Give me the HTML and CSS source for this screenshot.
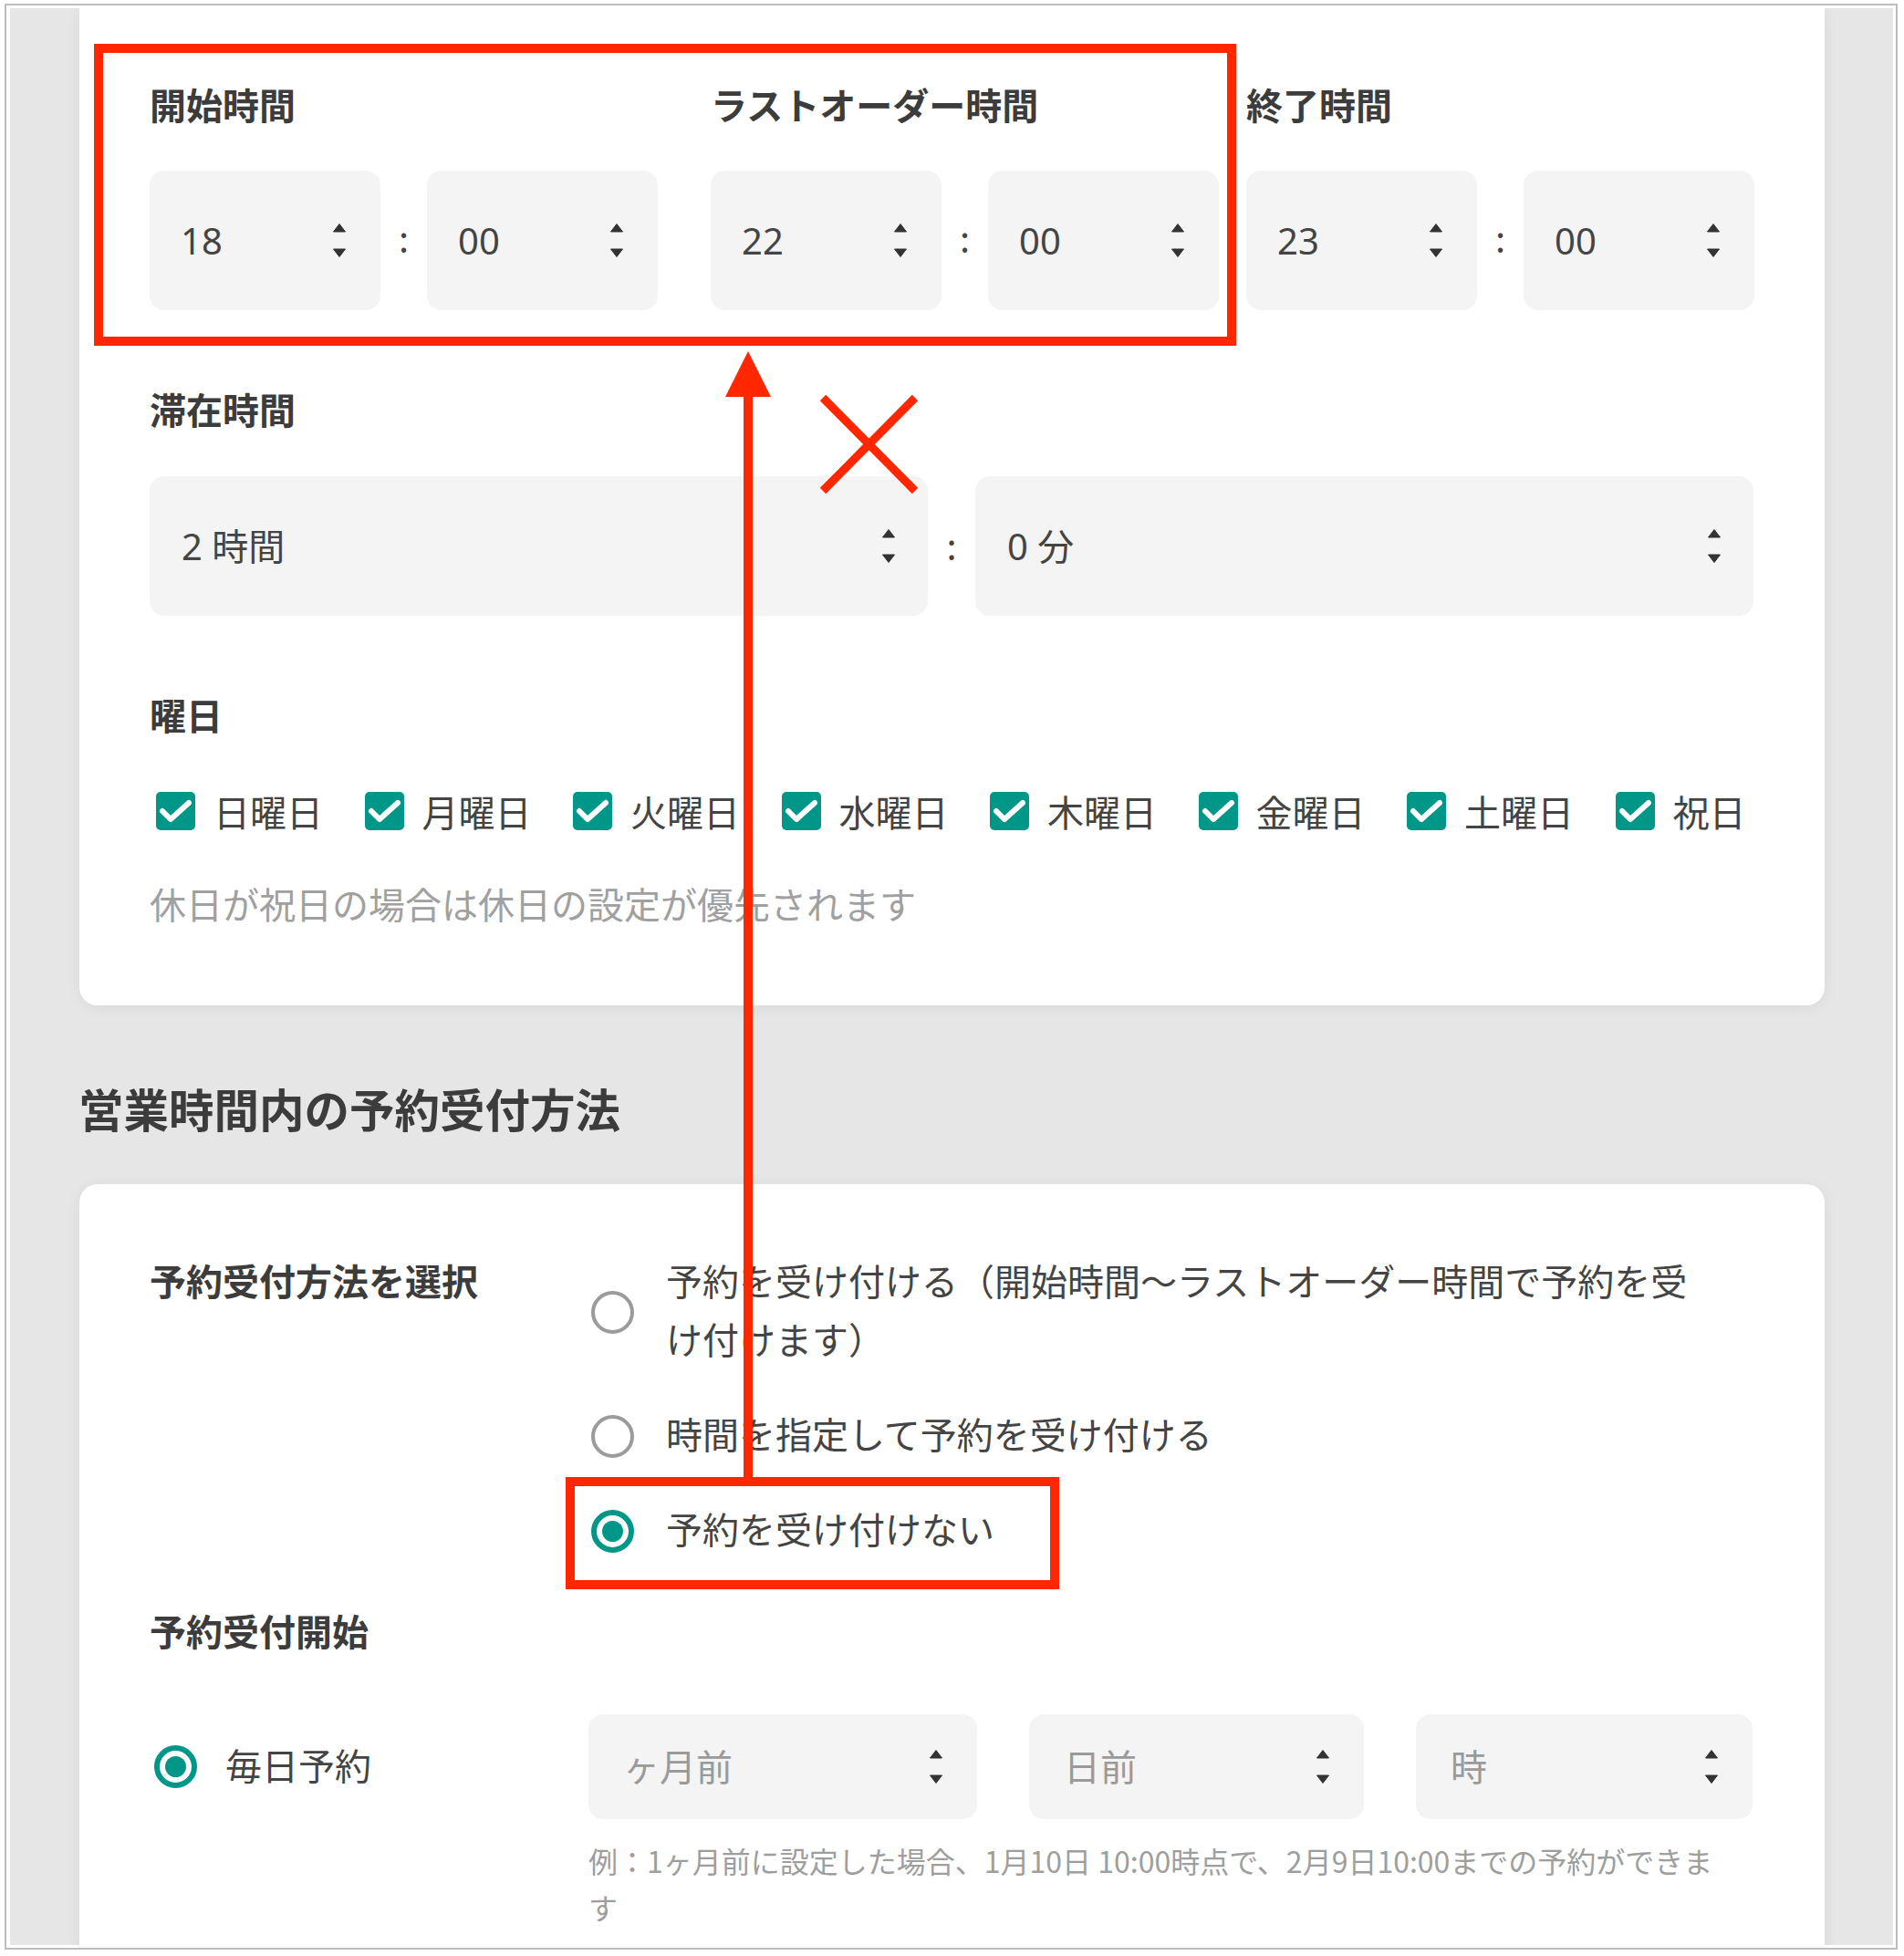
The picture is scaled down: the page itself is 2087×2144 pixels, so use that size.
FILE: index.html
```html
<!DOCTYPE html>
<html lang="ja">
<head>
    <meta charset="UTF-8">
    <meta name="viewport" content="width=device-width, initial-scale=1.0">
    <title>営業時間の設定</title>
    <link rel="stylesheet" href="styles.css">
</head>
<body>
    <svg class="defs" width="0" height="0">
        <symbol id="spin" viewBox="0 0 14 37">
            <path d="M7 0.5 L13.5 9 H0.5 Z M0.5 28 H13.5 L7 36.5 Z" fill="#333" stroke="#333" stroke-width="1" stroke-linejoin="round"/>
        </symbol>
        <symbol id="tick" viewBox="0 0 43 42">
            <polyline points="7,21 16,30 36,12" fill="none" stroke="#fff" stroke-width="6" stroke-linecap="round" stroke-linejoin="round"/>
        </symbol>
    </svg>

    <div class="frame">
        <div class="screen">

            <div class="card card-top">
                <div class="times">
                    <div class="time-group">
                        <div class="field-label">開始時間</div>
                        <div class="pair">
                            <div class="select time"><span>18</span><svg class="spin"><use href="#spin"/></svg></div>
                            <span class="colon">:</span>
                            <div class="select time"><span>00</span><svg class="spin"><use href="#spin"/></svg></div>
                        </div>
                    </div>
                    <div class="time-group">
                        <div class="field-label">ラストオーダー時間</div>
                        <div class="pair">
                            <div class="select time"><span>22</span><svg class="spin"><use href="#spin"/></svg></div>
                            <span class="colon">:</span>
                            <div class="select time"><span>00</span><svg class="spin"><use href="#spin"/></svg></div>
                        </div>
                    </div>
                    <div class="time-group">
                        <div class="field-label">終了時間</div>
                        <div class="pair">
                            <div class="select time"><span>23</span><svg class="spin"><use href="#spin"/></svg></div>
                            <span class="colon">:</span>
                            <div class="select time"><span>00</span><svg class="spin"><use href="#spin"/></svg></div>
                        </div>
                    </div>
                </div>

                <div class="field-label spaced">滞在時間</div>
                <div class="pair stay">
                    <div class="select"><span>2 時間</span><svg class="spin"><use href="#spin"/></svg></div>
                    <span class="colon wide">:</span>
                    <div class="select"><span>0 分</span><svg class="spin"><use href="#spin"/></svg></div>
                </div>

                <div class="field-label spaced">曜日</div>
                <div class="days">
                    <label class="day"><span class="check"><svg><use href="#tick"/></svg></span>日曜日</label>
                    <label class="day"><span class="check"><svg><use href="#tick"/></svg></span>月曜日</label>
                    <label class="day"><span class="check"><svg><use href="#tick"/></svg></span>火曜日</label>
                    <label class="day"><span class="check"><svg><use href="#tick"/></svg></span>水曜日</label>
                    <label class="day"><span class="check"><svg><use href="#tick"/></svg></span>木曜日</label>
                    <label class="day"><span class="check"><svg><use href="#tick"/></svg></span>金曜日</label>
                    <label class="day"><span class="check"><svg><use href="#tick"/></svg></span>土曜日</label>
                    <label class="day"><span class="check"><svg><use href="#tick"/></svg></span>祝日</label>
                </div>
                <p class="note">休日が祝日の場合は休日の設定が優先されます</p>
            </div>

            <h2 class="section-title">営業時間内の予約受付方法</h2>

            <div class="card card-bottom">
                <div class="method">
                    <div class="row-label">予約受付方法を選択</div>
                    <div class="options">
                        <label class="option"><span class="radio"></span><span class="option-text">予約を受け付ける（開始時間〜ラストオーダー時間で予約を受け付けます）</span></label>
                        <label class="option"><span class="radio"></span><span class="option-text">時間を指定して予約を受け付ける</span></label>
                        <label class="option"><span class="radio on"></span><span class="option-text">予約を受け付けない</span></label>
                    </div>
                </div>

                <div class="field-label start-label">予約受付開始</div>
                <div class="start-row">
                    <label class="option daily"><span class="radio on"></span><span class="option-text">毎日予約</span></label>
                    <div class="start-fields">
                        <div class="selects">
                            <div class="select short month"><span class="placeholder">ヶ月前</span><svg class="spin"><use href="#spin"/></svg></div>
                            <div class="select short dayago"><span class="placeholder">日前</span><svg class="spin"><use href="#spin"/></svg></div>
                            <div class="select short hour"><span class="placeholder">時</span><svg class="spin"><use href="#spin"/></svg></div>
                        </div>
                        <p class="example">例：1ヶ月前に設定した場合、1月10日 10:00時点で、2月9日10:00までの予約ができます</p>
                    </div>
                </div>
            </div>

            <!-- annotations -->
            <div class="mark mark-times"></div>
            <div class="mark mark-option"></div>
            <svg class="arrows" width="2064" height="2123">
                <line x1="809" y1="420" x2="809" y2="1614" stroke="#ff2600" stroke-width="10"/>
                <polygon points="809,376 834,426 784,426" fill="#ff2600"/>
                <line x1="891" y1="427" x2="992" y2="529" stroke="#ff2600" stroke-width="9"/>
                <line x1="992" y1="427" x2="891" y2="529" stroke="#ff2600" stroke-width="9"/>
            </svg>
        </div>
    </div>
</body>
</html>
```

FILE: styles.css
```css
* {
    box-sizing: border-box;
}
body {
    margin: 0;
    background: #fff;
    font-family: "Noto Sans CJK JP", "Noto Sans", sans-serif;
    color: #444;
}
.defs {
    position: absolute;
}
.frame {
    width: 2075px;
    height: 2133px;
    margin: 4px 0 0 5px;
    padding: 3px 3px 3px 4px;
    border: 2px solid #bdbdbd;
}
.screen {
    position: relative;
    height: 100%;
    overflow: hidden;
    padding: 0 75px 0 76px;
    background: #e6e6e6;
}
.card {
    padding: 0 78px 0 77px;
    background: #fff;
    box-shadow: 0 2px 18px rgba(0, 0, 0, 0.06);
}
.card-top {
    padding-top: 77px;
    padding-bottom: 84px;
    border-radius: 0 0 20px 20px;
}
.card-bottom {
    padding-top: 76px;
    padding-bottom: 80px;
    border-radius: 20px 20px 0 0;
}
.field-label {
    font-size: 40px;
    font-weight: 700;
    line-height: 56px;
    color: #3c3c3c;
}
.field-label.spaced {
    margin-top: 80px;
}
.times {
    display: flex;
}
.time-group:nth-child(1) {
    margin-right: 58px;
}
.time-group:nth-child(2) {
    margin-right: 30px;
}
.pair {
    display: flex;
    align-items: center;
    margin-top: 45px;
}
.pair.stay {
    margin-top: 46px;
}
.colon {
    width: 51px;
    margin: -5px 0 5px;
    text-align: center;
    font-size: 40px;
    line-height: 1;
    color: #444;
}
.colon.wide {
    width: 52px;
    margin: -3px 0 3px;
}
.select {
    display: flex;
    align-items: center;
    justify-content: space-between;
    height: 153px;
    padding: 0 38px 0 34px;
    border-radius: 16px;
    background: #f4f4f4;
    font-size: 40px;
    color: #444;
}
.select span {
    margin: -2px 0 2px;
    font-family: "Noto Sans", "Noto Sans CJK JP", sans-serif;
}
.select.time span {
    margin: 0;
}
.select.time {
    width: 253px;
}
.stay .select {
    flex: 1;
    padding-left: 35px;
    padding-right: 36px;
}
.spin {
    width: 14px;
    height: 37px;
    flex: none;
}
.days {
    display: flex;
    margin-top: 50px;
    padding-left: 7px;
}
.day {
    flex: 0 0 228.5px;
    display: flex;
    align-items: center;
    gap: 20px;
    font-size: 40px;
    line-height: 56px;
    color: #444;
}
.check {
    width: 43px;
    height: 42px;
    flex: none;
    border-radius: 5px;
    background: #009688;
}
.check svg {
    display: block;
    width: 43px;
    height: 42px;
}
.note {
    margin: 45px 0 0;
    font-size: 40px;
    line-height: 56px;
    color: #a0a0a0;
}
.section-title {
    margin: 79px 0 49px -1px;
    font-size: 49.5px;
    font-weight: 700;
    line-height: 68px;
    color: #3c3c3c;
}
.method {
    display: flex;
    align-items: flex-start;
}
.row-label {
    flex: none;
    width: 481px;
    margin: -3px 0 3px;
    font-size: 40px;
    font-weight: 700;
    line-height: 64px;
    color: #3c3c3c;
}
.options {
    display: flex;
    flex-direction: column;
    gap: 40px;
}
.option {
    display: flex;
    align-items: center;
    gap: 35px;
    margin-left: 3px;
    font-size: 40px;
    line-height: 64px;
    color: #444;
}
.option-text {
    max-width: 1140px;
    margin: -3px 0 3px;
}
.radio {
    flex: none;
    width: 47px;
    height: 47px;
    border: 4px solid #9b9b9b;
    border-radius: 50%;
}
.radio.on {
    display: flex;
    align-items: center;
    justify-content: center;
    border: 6px solid #009688;
}
.radio.on::after {
    content: "";
    width: 23px;
    height: 23px;
    border-radius: 50%;
    background: #009688;
}
.start-label {
    margin-top: 45px;
    line-height: 64px;
}
.start-row {
    display: flex;
    margin-top: 60px;
}
.option.daily {
    flex: none;
    width: 481px;
    height: 115px;
    margin-left: 0;
    padding-left: 5px;
    gap: 31px;
}
.start-fields {
    flex: 1;
}
.selects {
    display: flex;
    gap: 57px;
}
.select.short {
    height: 115px;
    padding: 0 38px 0 38px;
}
.select.month {
    width: 426px;
}
.select.dayago {
    width: 367px;
}
.select.hour {
    width: 369px;
}
.placeholder {
    color: #9a9a9a;
}
.example {
    max-width: 1250px;
    margin: 20px 0 0;
    font-size: 32px;
    line-height: 51px;
    color: #9e9e9e;
}
.mark {
    position: absolute;
    border: 10px solid #ff2600;
}
.mark-times {
    left: 92px;
    top: 39px;
    width: 1252px;
    height: 331px;
}
.mark-option {
    left: 609px;
    top: 1610px;
    width: 541px;
    height: 123px;
}
.arrows {
    position: absolute;
    left: 0;
    top: 0;
    pointer-events: none;
}
```
